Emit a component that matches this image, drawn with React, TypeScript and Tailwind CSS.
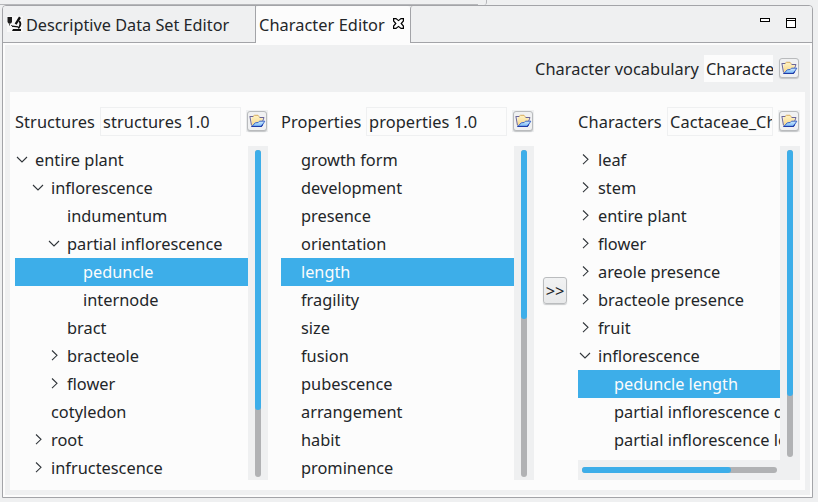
import React from "react";

type Node = { label: string; depth: number; state?: "open" | "closed"; selected?: boolean };

const structures: Node[] = [
  { label: "entire plant", depth: 0, state: "open" },
  { label: "inflorescence", depth: 1, state: "open" },
  { label: "indumentum", depth: 2 },
  { label: "partial inflorescence", depth: 2, state: "open" },
  { label: "peduncle", depth: 3, selected: true },
  { label: "internode", depth: 3 },
  { label: "bract", depth: 2 },
  { label: "bracteole", depth: 2, state: "closed" },
  { label: "flower", depth: 2, state: "closed" },
  { label: "cotyledon", depth: 1 },
  { label: "root", depth: 1, state: "closed" },
  { label: "infructescence", depth: 1, state: "closed" },
];

const properties: Node[] = [
  "growth form",
  "development",
  "presence",
  "orientation",
  "length",
  "fragility",
  "size",
  "fusion",
  "pubescence",
  "arrangement",
  "habit",
  "prominence",
].map((label) => ({ label, depth: 0, selected: label === "length" }));

const characters: Node[] = [
  { label: "leaf", depth: 0, state: "closed" },
  { label: "stem", depth: 0, state: "closed" },
  { label: "entire plant", depth: 0, state: "closed" },
  { label: "flower", depth: 0, state: "closed" },
  { label: "areole presence", depth: 0, state: "closed" },
  { label: "bracteole presence", depth: 0, state: "closed" },
  { label: "fruit", depth: 0, state: "closed" },
  { label: "inflorescence", depth: 0, state: "open" },
  { label: "peduncle length", depth: 1, selected: true },
  { label: "partial inflorescence d", depth: 1 },
  { label: "partial inflorescence le", depth: 1 },
];

const indent = ["pl-0", "pl-4", "pl-8", "pl-12"];

function Tree({ nodes }: { nodes: Node[] }) {
  return (
    <div className="min-w-0 flex-1 overflow-hidden">
      {nodes.map((n) => (
        <div
          key={n.label}
          className={`flex h-7 whitespace-nowrap ${indent[n.depth]} ${n.selected ? "bg-[#3daee9] text-[16.25px] text-[#fcfcfc]" : ""}`}
        >
          <svg width="20" height="28" className="shrink-0" fill="none" stroke="#31363b" strokeWidth="1.1">
            {n.state === "open" && <path d="M2 11 L7 16 L12 11" />}
            {n.state === "closed" && <path d="M5 8.5 L10 13.3 L5 18.2" />}
          </svg>
          <span className="leading-7">{n.label}</span>
        </div>
      ))}
    </div>
  );
}

function VScroll({ thumb }: { thumb: string }) {
  return (
    <div className="flex w-5 shrink-0 flex-col items-center bg-[#eff0f1] pt-[3.5px] pb-[3.5px]">
      <div className="w-1.5 flex-1 rounded-full bg-[#b1b2b4]">
        <div className={`w-1.5 rounded-full bg-[#3daee9] ${thumb}`} />
      </div>
    </div>
  );
}

function FolderButton() {
  return (
    <div className="flex h-[22px] w-[22px] shrink-0 items-center justify-center bg-[#eff0f1]">
      <button className="flex h-[20px] w-[20px] items-center justify-center rounded-[3px] border border-[#b9bbbd] bg-[#f0f1f2] shadow-[0_1px_1px_#c4c6c8]">
        <svg width="17" height="14" viewBox="0 0 17 14" className="shrink-0">
          <defs>
            <linearGradient id="back" x1="0" y1="0" x2="0" y2="1">
              <stop offset="0" stopColor="#fff3c4" />
              <stop offset="1" stopColor="#f7d68a" />
            </linearGradient>
            <linearGradient id="front" x1="0" y1="0" x2="0" y2="1">
              <stop offset="0" stopColor="#d3ecff" />
              <stop offset="1" stopColor="#74b6f5" />
            </linearGradient>
          </defs>
          <path d="M2.5 11.5 V4 L4 2.5 L5.5 1.5 H9 L10.5 3 H13.5 V8" fill="url(#back)" />
          <path d="M4 2.5 L5.5 1.3 H9 L10.3 2.9" fill="none" stroke="#d8ac5c" />
          <path d="M0.5 2.5 H4.2 M10.5 3.5 H15 L13.7 7 M1 3 L2.5 11.5" fill="none" stroke="#6b6596" />
          <path d="M3 12.3 L6.3 8.8 L9.2 8.5 L10.5 7.2 H15.8 L12.5 12.3 Z" fill="url(#front)" stroke="#3a66c8" />
          <path d="M2.3 12.5 H12.3 L13.8 10.5" fill="none" stroke="#1f3aa6" strokeWidth="1.2" />
        </svg>
      </button>
    </div>
  );
}

function Header({ title, value, titleWidth }: { title: string; value: string; titleWidth: string }) {
  return (
    <div className="flex h-[29px] items-start tracking-[0.1px]">
      <span className={`shrink-0 whitespace-nowrap leading-[30px] ${titleWidth}`}>{title}</span>
      <div className="mr-[5px] h-[29px] min-w-0 flex-1 overflow-hidden whitespace-nowrap border border-[#eff0f1] pl-[2px] leading-[28px]">
        {value}
      </div>
      <div className="pt-[3px]">
        <FolderButton />
      </div>
    </div>
  );
}

function Microscope() {
  return (
    <svg width="16" height="16" viewBox="0 0 16 16" className="shrink-0">
      <rect width="16" height="16" fill="#f8f8f8" />
      <path d="M0.5 1 H5 V6 L4 7.5 H1.5 L0.5 6 Z" fill="#1c1c1c" />
      <path d="M2.5 7 V9.5 M4 9 L6 11" stroke="#555" fill="none" />
      <path d="M12 0.5 L14 2 L9.5 8.8 L7.7 7.5 Z" fill="#111" />
      <path d="M12.2 5 Q15 8.5 11.3 12.3" stroke="#111" strokeWidth="1.8" fill="none" />
      <path d="M5 10.2 L11 10.8" stroke="#111" strokeWidth="1.3" />
      <path d="M5 15 L6 13 H14 V15 Z" fill="#111" />
    </svg>
  );
}

export default function App() {
  return (
    <div className="h-[502px] w-[818px] overflow-hidden bg-[#eff0f1] font-['Noto_Sans',sans-serif] text-[16.35px] text-[#232629]">
      <div className="flex h-[5px] items-end">
        <div className="h-px w-[478px] bg-[#b6b7ba]" />
        <div className="ml-[3px] h-[5px] w-[6px] rounded-br-[3px] border-r border-[#b6b7ba]" />
      </div>
      <div className="ml-[2px] flex h-[493px] w-[811px] flex-col overflow-hidden rounded-t-[4px] border border-[#a3a4a8] bg-[#fcfcfc]">
        <div className="flex h-[37px] shrink-0 bg-[#eff0f1]">
          <div className="flex w-[253px] items-center border-r border-b border-[#a3a4a8] pl-[4px]">
            <Microscope />
            <span className="ml-[3px] whitespace-nowrap pt-[2px] text-[16.25px]">Descriptive Data Set Editor</span>
          </div>
          <div className="flex w-[154px] items-center rounded-t-[3px] bg-[#fcfcfc] pb-px pl-[3px]">
            <span className="whitespace-nowrap pt-[2px] tracking-[0.05px]">Character Editor</span>
            <svg width="11" height="11" viewBox="0 0 11 11" className="ml-[8px] mb-[2px]" fill="none" stroke="#000" strokeWidth="1.2">
              <path d="M0.6 0.6 H3 L5.5 2.6 L8 0.6 H10.4 V3 L8.2 5.5 L10.4 8 V10.4 H8 L5.5 8.4 L3 10.4 H0.6 V8 L2.8 5.5 L0.6 3 Z" />
            </svg>
          </div>
          <div className="flex flex-1 justify-end gap-4 rounded-tl-[3px] border-b border-l border-[#a3a4a8] pr-[16px]">
            <div className="mt-[12px] h-[4px] w-[10px] border border-black bg-white" />
            <div className="mt-[12px] h-[10px] w-[10px] border border-black bg-white pt-px">
              <div className="h-px bg-black" />
            </div>
          </div>
        </div>
        <div className="mx-[2px] mt-[2px] flex h-[450px] flex-col bg-[#eff0f1] px-[5px]">
          <div className="flex h-[47px] items-center justify-end pr-[5px]">
            <span className="mr-[5px] pt-px tracking-[0.05px]">Character vocabulary</span>
            <div className="mr-[5px] h-[27px] w-[69px] overflow-hidden whitespace-nowrap bg-[#fcfcfc] pl-[2px] leading-[28px]">
              Characte
            </div>
            <div className="pb-px">
              <FolderButton />
            </div>
          </div>
          <div className="flex h-[398px] bg-[#fcfcfc] px-[5px] pt-[15px] pb-[10px]">
            <section className="flex w-[253px] flex-col">
              <Header title="Structures" value="structures 1.0" titleWidth="w-[85px]" />
              <div className="mt-[10px] flex min-h-0 flex-1">
                <Tree nodes={structures} />
                <VScroll thumb="h-[260px]" />
              </div>
            </section>
            <section className="ml-[13px] flex w-[253px] flex-col">
              <Header title="Properties" value="properties 1.0" titleWidth="w-[85px]" />
              <div className="mt-[10px] flex min-h-0 flex-1">
                <Tree nodes={properties} />
                <VScroll thumb="h-[169px]" />
              </div>
            </section>
            <button className="mt-[170px] ml-[9px] flex h-[27px] w-[24px] shrink-0 justify-center rounded-[3px] border border-[#babcbe] bg-linear-to-b from-[#f1f2f3] to-[#e8e9ea] leading-[26px] shadow-[0_1px_1px_#c9cbcd]">
              <span>&gt;&gt;</span>
            </button>
            <section className="ml-[11px] flex w-[222px] flex-col">
              <Header title="Characters" value="Cactaceae_Ch" titleWidth="w-[89px]" />
              <div className="mt-[10px] flex h-[314px]">
                <Tree nodes={characters} />
                <VScroll thumb="h-[246px]" />
              </div>
              <div className="flex h-5 items-center bg-[#eff0f1] pr-[23.5px] pl-[3.5px]">
                <div className="h-1.5 flex-1 rounded-full bg-[#b1b2b4]">
                  <div className="h-1.5 w-[149.5px] rounded-full bg-[#3daee9]" />
                </div>
              </div>
            </section>
          </div>
        </div>
      </div>
    </div>
  );
}
